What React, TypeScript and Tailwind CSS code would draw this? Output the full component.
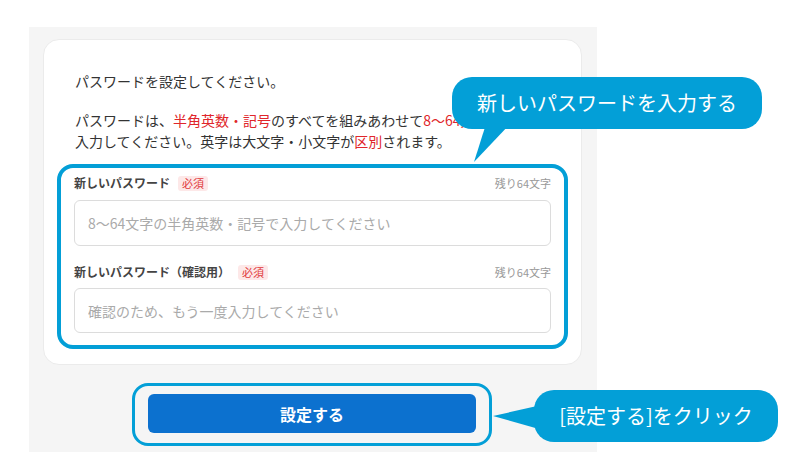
import React from 'react';

const BLUE = 'bg-[#039fd7]';

function Field({ label, placeholder, first }: { label: string; placeholder: string; first?: boolean }) {
  return (
    <div className={first ? 'pt-[6px]' : 'pt-[17px]'}>
      <div className="flex h-[18px] items-center">
        <span className="text-[12px] font-bold leading-[18px] text-[#444]">{label}</span>
        <span className="ml-[8px] flex h-[15px] w-[30px] items-center justify-center rounded-[3px] bg-[#fde8e8] text-[11px] leading-none text-[#e0383b]">
          必須
        </span>
        <span className="ml-auto text-[11px] leading-[18px] text-[#999]">残り64文字</span>
      </div>
      <input
        type="password"
        placeholder={placeholder}
        className={
          'block w-full rounded-[6px] border border-[#dcdcdc] bg-white px-[13px] text-[14px] text-[#333] outline-none placeholder:text-[#aaa] ' +
          (first ? 'mt-[8px] h-[46px]' : 'mt-[7px] h-[45px]')
        }
      />
    </div>
  );
}

export default function App() {
  return (
    <div className="relative h-[474px] w-[804px] overflow-hidden bg-white font-['Noto_Sans_CJK_JP','Noto_Sans',sans-serif] text-[#333]">
      <div className="pl-[29px] pt-[27px]">
        <div className="w-[568px] bg-[#f5f5f5] px-[14px] pb-[6px] pt-[12px]">
          {/* card */}
          <div className="w-[539px] rounded-[16px] border border-[#ebebeb] bg-white pb-[15px] pt-[31px]">
            <div className="px-[31px] text-[14px] leading-[21px] text-[#333]">
              <p>パスワードを設定してください。</p>
              <p className="mt-[18px]">
                パスワードは、<span className="text-[#e0262b]">半角英数・記号</span>のすべてを組みあわせて
                <span className="text-[#e0262b]">8〜64文字</span>で
                <br />
                入力してください。英字は大文字・小文字が<span className="text-[#e0262b]">区別</span>されます。
              </p>
            </div>

            <div className="mx-[13px] mt-[12px] rounded-[16px] border-4 border-[#039fd7] px-[13px] pb-[12px]">
              <Field first label="新しいパスワード" placeholder="8〜64文字の半角英数・記号で入力してください" />
              <Field label="新しいパスワード（確認用）" placeholder="確認のため、もう一度入力してください" />
            </div>
          </div>

          {/* submit */}
          <div className="ml-[89px] mt-[18px] w-[360px] rounded-[16px] border-[3px] border-[#039fd7] px-[13px] pb-[10px] pt-[8px]">
            <button className="flex h-[39px] w-full items-center justify-center rounded-[6px] bg-[#0c71cf] text-[16px] font-bold text-white">
              設定する
            </button>
          </div>
        </div>
      </div>

      {/* callout: input */}
      <svg className="absolute left-[470px] top-[120px]" width="45" height="45">
        <polygon points="16,4 40,4 4,42" fill="#039fd7" />
      </svg>
      <div className={`absolute left-[452px] top-[77px] flex h-[52px] w-[310px] items-center justify-center rounded-[20px] ${BLUE} text-[20px] text-white`}>
        新しいパスワードを入力する
      </div>

      {/* callout: click */}
      <svg className="absolute left-[490px] top-[400px]" width="60" height="35">
        <polygon points="3,16 56,4 56,31" fill="#039fd7" />
      </svg>
      <div className={`absolute left-[534px] top-[390px] flex h-[52px] w-[244px] items-center justify-center rounded-[20px] ${BLUE} text-[20px] text-white`}>
        [設定する]をクリック
      </div>
    </div>
  );
}
